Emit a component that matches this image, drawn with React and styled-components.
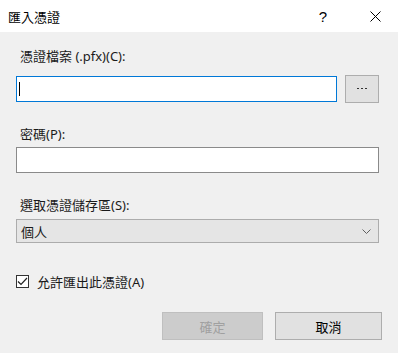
import React from 'react';
import styled, { createGlobalStyle } from 'styled-components';

const GlobalStyle = createGlobalStyle`
  html, body {
    margin: 0;
    padding: 0;
    background: #f0f0f0;
  }
  body {
    font-family: "Noto Sans", "Noto Sans CJK TC", sans-serif;
    font-size: 13px;
    color: #1a1a1a;
  }
`;

const Dialog = styled.div`
  width: 398px;
  height: 353px;
  background: #f0f0f0;
  display: flex;
  flex-direction: column;
  overflow: hidden;
`;

const TitleBar = styled.div`
  height: 32px;
  background: #ffffff;
  display: flex;
  align-items: center;
  padding-left: 8px;
  flex-shrink: 0;
`;

const Title = styled.div`
  flex: 1;
  font-size: 13px;
  color: #000;
`;

const HelpButton = styled.div`
  width: 46px;
  text-align: center;
  font-family: "Liberation Sans", sans-serif;
  font-size: 15px;
  color: #000;
  margin-right: 6px;
`;

const CloseButton = styled.div`
  width: 46px;
  height: 32px;
  display: flex;
  align-items: center;
  justify-content: center;
`;

const Body = styled.div`
  padding: 16px 19px 0 16px;
  display: flex;
  flex-direction: column;
`;

const Label = styled.div`
  line-height: 16px;
  padding-left: 4px;
  margin-top: ${p => p.$top || 0}px;
`;

const FileRow = styled.div`
  display: flex;
  align-items: center;
  gap: 8px;
  margin-top: 11px;
`;

const TextBox = styled.div`
  box-sizing: border-box;
  height: 26px;
  background: #fff;
  border: 1px solid ${p => (p.$focused ? '#0078d7' : '#8a8a8a')};
  width: ${p => p.$width || '100%'};
  margin-top: ${p => p.$top || 0}px;
  position: relative;
`;

const Caret = styled.div`
  position: absolute;
  left: 2px;
  top: 5px;
  width: 1px;
  height: 14px;
  background: #000;
`;

const Button = styled.div`
  box-sizing: border-box;
  height: 28px;
  width: ${p => p.$width}px;
  background: ${p => (p.$disabled ? '#cccccc' : '#e1e1e1')};
  border: 1px solid ${p => (p.$disabled ? '#bfbfbf' : '#adadad')};
  color: ${p => (p.$disabled ? '#a0a0a0' : '#000')};
  display: flex;
  align-items: center;
  justify-content: center;
`;

const Select = styled.div`
  box-sizing: border-box;
  height: 24px;
  margin-top: 6px;
  background: #e5e5e5;
  border: 1px solid #acacac;
  display: flex;
  align-items: center;
  justify-content: space-between;
  padding: 0 7px 0 4px;
`;

const CheckRow = styled.label`
  display: flex;
  align-items: center;
  gap: 8px;
  margin-top: 29px;
`;

const CheckBox = styled.div`
  box-sizing: border-box;
  width: 13px;
  height: 13px;
  border: 1px solid #333;
  background: #fff;
  display: flex;
  align-items: center;
  justify-content: center;
`;

const ButtonRow = styled.div`
  display: flex;
  justify-content: flex-end;
  gap: 12px;
  margin-top: 21px;
  margin-right: -3px;
`;

export default function App() {
  return (
    <Dialog>
      <GlobalStyle />
      <TitleBar>
        <Title>匯入憑證</Title>
        <HelpButton>?</HelpButton>
        <CloseButton>
          <svg width="11" height="11" viewBox="0 0 11 11">
            <path d="M0.5 0.5 L10.5 10.5 M10.5 0.5 L0.5 10.5" stroke="#000" strokeWidth="1" />
          </svg>
        </CloseButton>
      </TitleBar>
      <Body>
        <Label>憑證檔案 (.pfx)(C):</Label>
        <FileRow>
          <TextBox $focused $width="321px">
            <Caret />
          </TextBox>
          <Button $width={34}>
            <svg width="10" height="2" viewBox="0 0 10 2">
              <rect x="0" y="0" width="2" height="1" fill="#333" />
              <rect x="4" y="0" width="2" height="1" fill="#333" />
              <rect x="8" y="0" width="2" height="1" fill="#333" />
            </svg>
          </Button>
        </FileRow>
        <Label $top={23}>密碼(P):</Label>
        <TextBox $top={5} />
        <Label $top={24}>選取憑證儲存區(S):</Label>
        <Select>
          <span>個人</span>
          <svg width="9" height="5" viewBox="0 0 9 5">
            <path d="M0.5 0.5 L4.5 4.5 L8.5 0.5" fill="none" stroke="#606060" strokeWidth="1" />
          </svg>
        </Select>
        <CheckRow>
          <CheckBox>
            <svg width="11" height="9" viewBox="0 0 11 9">
              <path d="M1 4.5 L4 7.5 L10 1" fill="none" stroke="#222" strokeWidth="1.2" />
            </svg>
          </CheckBox>
          <span>允許匯出此憑證(A)</span>
        </CheckRow>
        <ButtonRow>
          <Button $width={101} $disabled>確定</Button>
          <Button $width={107}>取消</Button>
        </ButtonRow>
      </Body>
    </Dialog>
  );
}
